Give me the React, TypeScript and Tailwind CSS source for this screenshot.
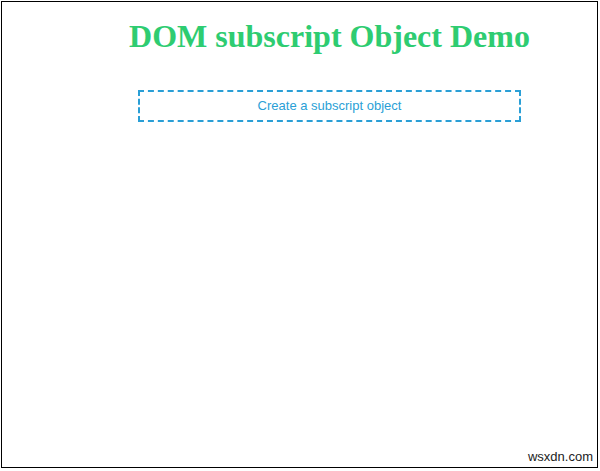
import React from 'react';

export default function App() {
  return (
    <div className="w-[600px] h-[471px] bg-white overflow-hidden">
      <div className="relative ml-px mt-px w-[597px] h-[467px] border border-black">
        <div className="pl-[136px] w-[519px]">
          <h1 className="pt-[16px] flex justify-center text-[32px] leading-[36px] font-bold text-[#2ecc71] whitespace-nowrap [font-family:'Liberation_Serif',serif]">
            <span>DOM subscript Object Demo</span>
          </h1>
          <div className="mt-[36px] h-[32px] border-2 border-dashed border-[#2a9fd6] flex items-center justify-center text-[13px] text-[#2a9fd6] [font-family:'Liberation_Sans',Arial,sans-serif]">
            Create a subscript object
          </div>
        </div>
        <span className="absolute right-[4px] bottom-[1px] text-[13px] text-[#222] [font-family:'Liberation_Sans',Arial,sans-serif]">
          wsxdn.com
        </span>
      </div>
    </div>
  );
}
